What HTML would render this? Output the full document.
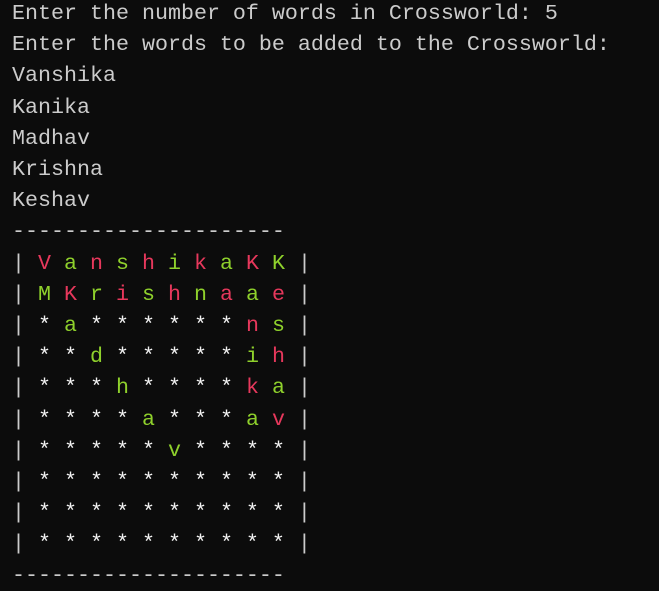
<!DOCTYPE html>
<html><head><meta charset="utf-8"><style>
html,body{margin:0;padding:0;background:#0c0c0c;width:659px;height:577px;overflow:hidden}
pre{margin:0;position:absolute;left:12px;top:-2px;font-family:"Liberation Mono",monospace;font-size:21.67px;line-height:31.2px;color:#cccccc;white-space:pre}
.r{color:#e7385c}.g{color:#8fd12c}.w{color:#f2f2f2}
</style></head><body><pre>Enter the number of words in Crossworld: 5
Enter the words to be added to the Crossworld:
Vanshika
Kanika
Madhav
Krishna
Keshav
---------------------
| <span class="r">V</span> <span class="g">a</span> <span class="r">n</span> <span class="g">s</span> <span class="r">h</span> <span class="g">i</span> <span class="r">k</span> <span class="g">a</span> <span class="r">K</span> <span class="g">K</span> |
| <span class="g">M</span> <span class="r">K</span> <span class="g">r</span> <span class="r">i</span> <span class="g">s</span> <span class="r">h</span> <span class="g">n</span> <span class="r">a</span> <span class="g">a</span> <span class="r">e</span> |
| <span class="w">*</span> <span class="g">a</span> <span class="w">* * * * * *</span> <span class="r">n</span> <span class="g">s</span> |
| <span class="w">* *</span> <span class="g">d</span> <span class="w">* * * * *</span> <span class="g">i</span> <span class="r">h</span> |
| <span class="w">* * *</span> <span class="g">h</span> <span class="w">* * * *</span> <span class="r">k</span> <span class="g">a</span> |
| <span class="w">* * * *</span> <span class="g">a</span> <span class="w">* * *</span> <span class="g">a</span> <span class="r">v</span> |
| <span class="w">* * * * *</span> <span class="g">v</span> <span class="w">* * * *</span> |
| <span class="w">* * * * * * * * * *</span> |
| <span class="w">* * * * * * * * * *</span> |
| <span class="w">* * * * * * * * * *</span> |
---------------------
</pre></body></html>
